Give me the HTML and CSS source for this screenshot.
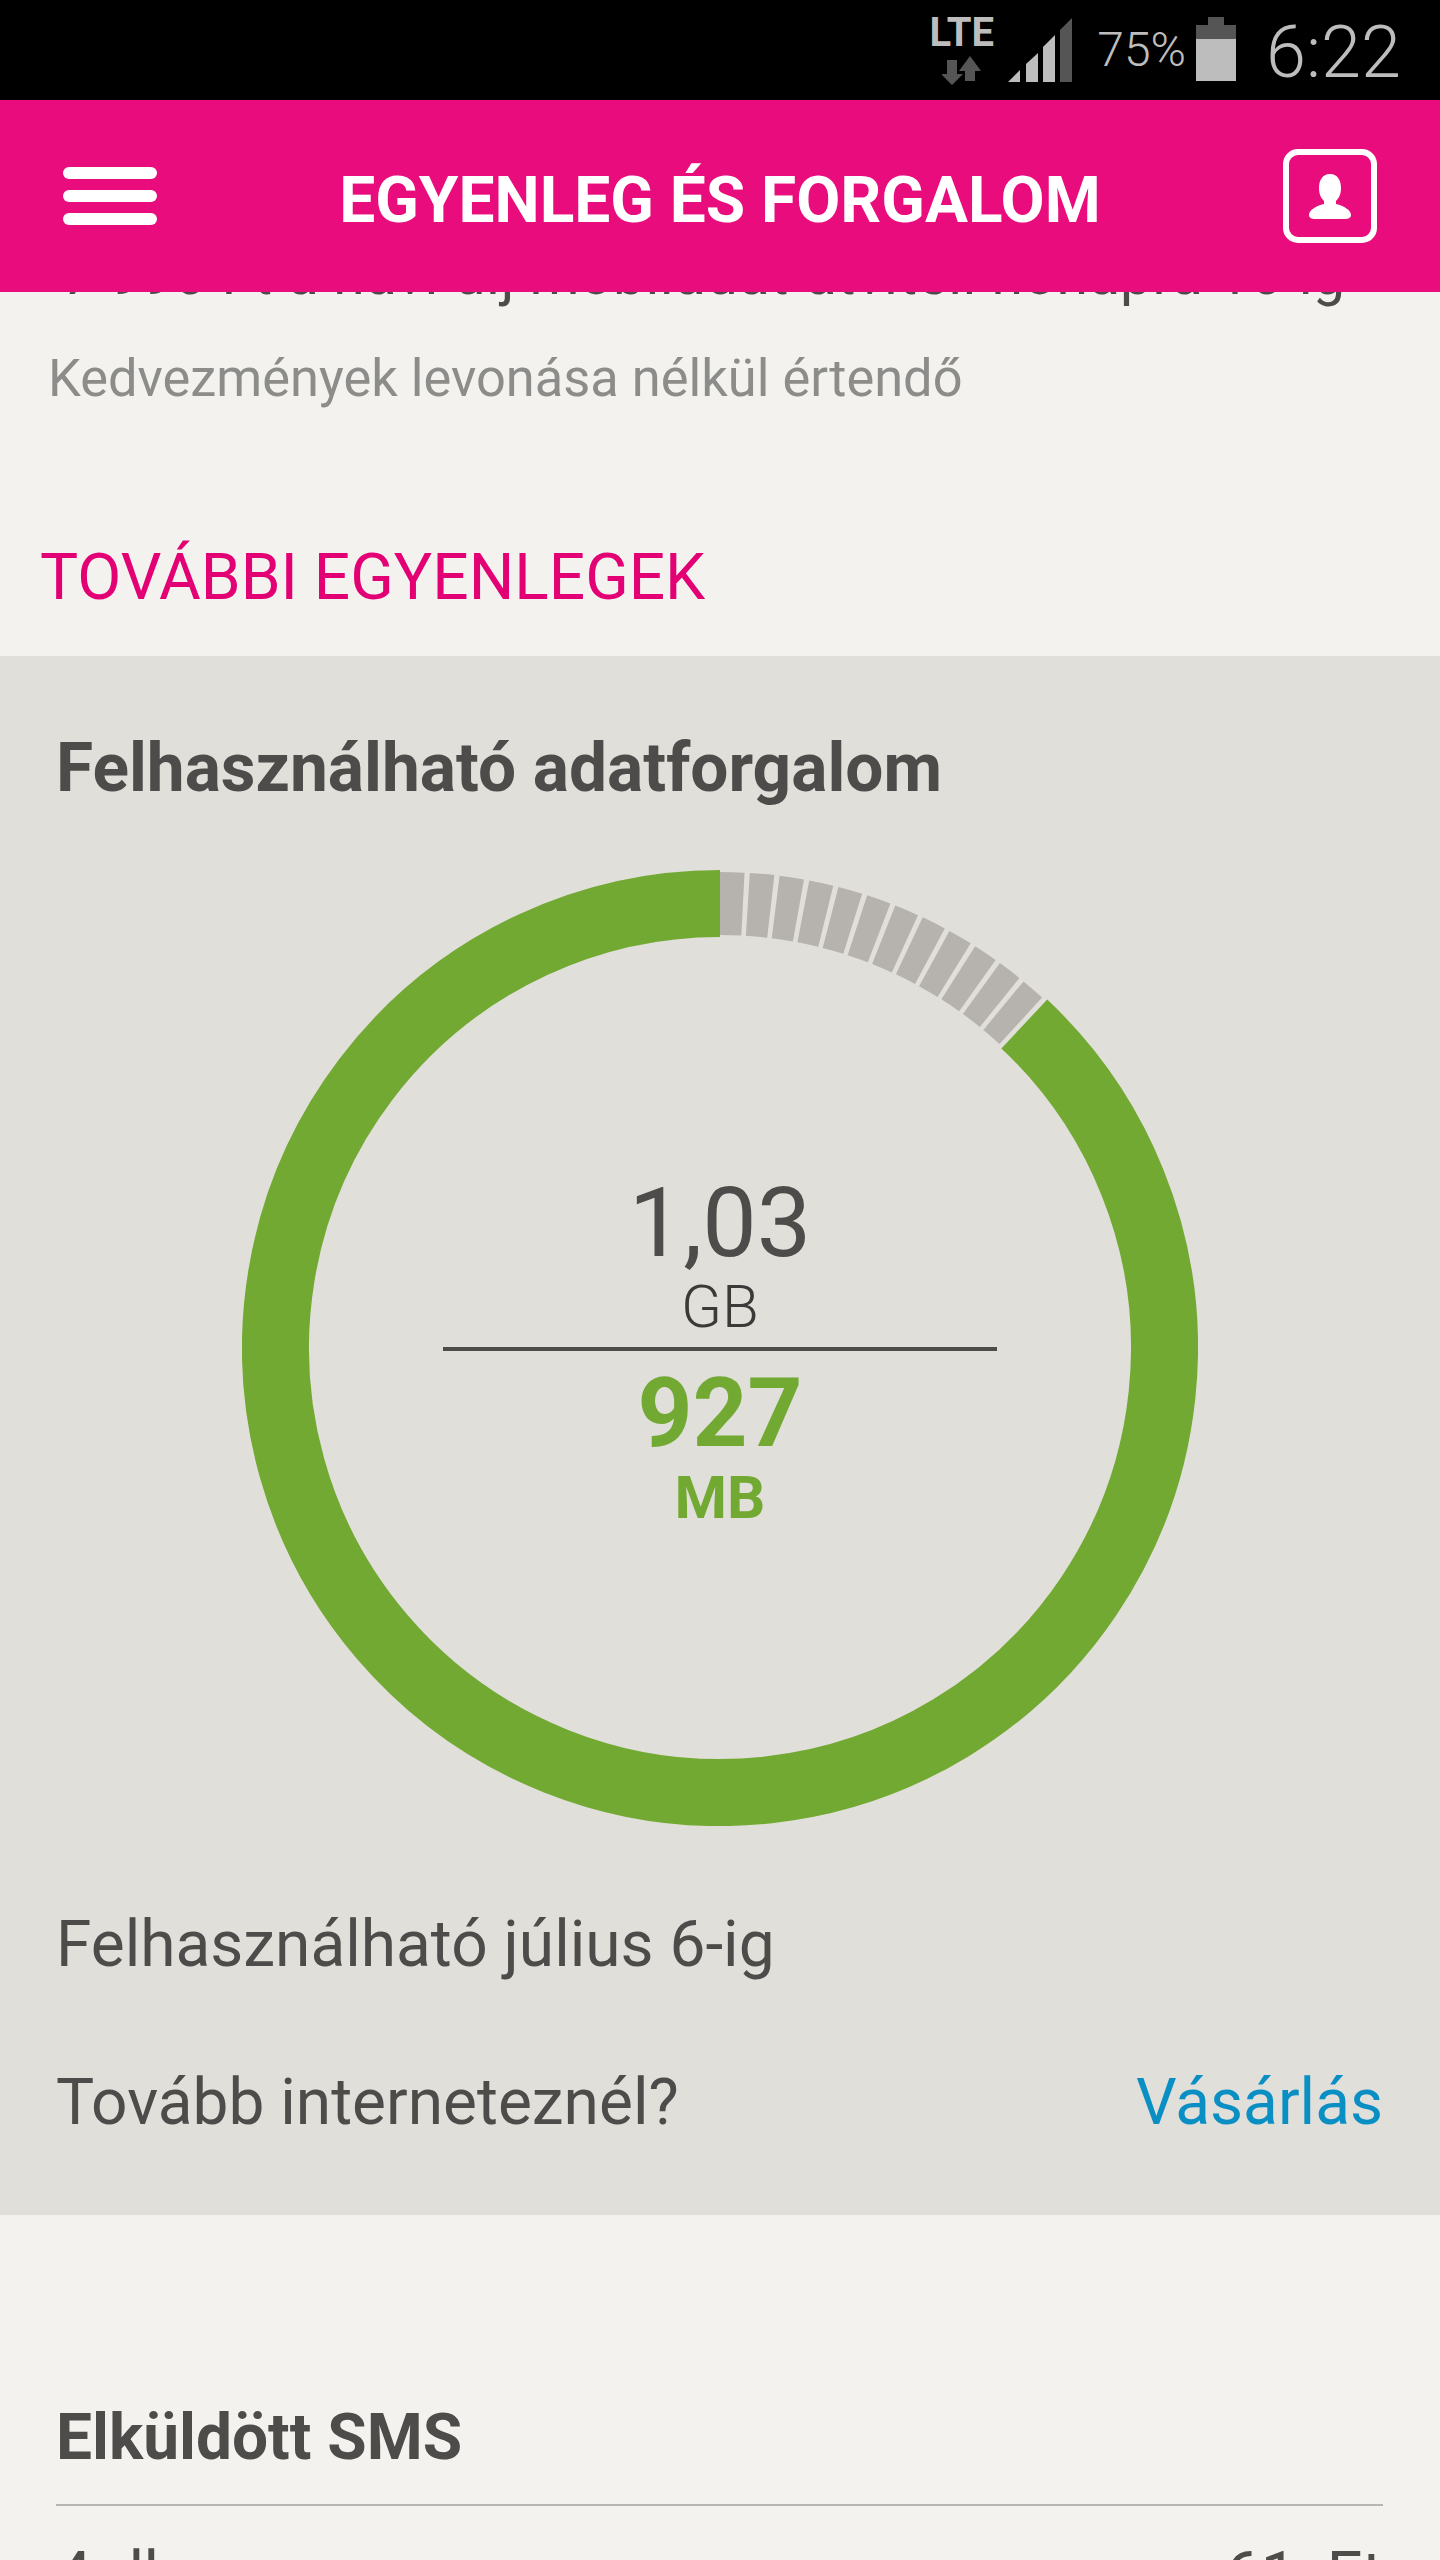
FILE: index.html
```html
<!DOCTYPE html>
<html lang="hu">
<head>
    <meta charset="UTF-8">
    <meta name="viewport" content="width=device-width, initial-scale=1.0">
    <title>Egyenleg és forgalom</title>
    <link rel="stylesheet" href="styles.css">
</head>
<body>
<div class="phone">

    <div class="status-bar">
        <div class="network">
            <span class="lte">LTE</span>
            <svg class="arrows" width="40" height="30" viewBox="0 0 40 30">
                <path class="dark" d="M5 5h10v14h6L10 30 -1 19h6z"/>
                <path class="dark" d="M29 1l11 15h-6v10H24V16h-6z" transform="translate(-1 0)"/>
            </svg>
        </div>
        <svg class="signal" width="64" height="64" viewBox="0 0 64 64">
            <path class="light" d="M0 64L12 52V64z"/>
            <path class="light" d="M18 46L30 35V64H18z"/>
            <path class="light" d="M35 29L47 17V64H35z"/>
            <path class="dark" d="M52 12L64 0V64H52z"/>
        </svg>
        <span class="battery-text">75%</span>
        <svg class="battery" width="40" height="64" viewBox="0 0 40 64">
            <path class="dark" d="M12 0H28V8H40V22H0V8H12z"/>
            <rect class="light" x="0" y="22" width="40" height="42"/>
        </svg>
        <span class="clock">6:22</span>
    </div>

    <header class="app-header">
        <div class="hamburger">
            <span></span>
            <span></span>
            <span></span>
        </div>
        <h1>EGYENLEG ÉS FORGALOM</h1>
        <div class="profile">
            <svg width="46" height="48" viewBox="0 0 46 48">
                <path d="M23 2c8 0 11 7 11 14 0 6-2 10-5 13v3c8 2 15 6 15 11 0 3-3 4-6 4H8c-3 0-6-1-6-4 0-5 7-9 15-11v-3c-3-3-5-7-5-13C12 9 15 2 23 2z"/>
            </svg>
        </div>
    </header>

    <main>
        <p class="hidden-line">7 990 Ft a havi díj mobiladat-átviteli hónapra 16-ig</p>
        <p class="note">Kedvezmények levonása nélkül értendő</p>
        <h2 class="section-title">TOVÁBBI EGYENLEGEK</h2>

        <section class="data-panel">
            <h3 class="panel-title">Felhasználható adatforgalom</h3>

            <div class="ring">
                <svg width="956" height="956" viewBox="0 0 956 956">
                    <path class="ring-used" d="M478 33.5A444.5 444.5 0 0 1 782.3 154"/>
                    <path class="ring-left" d="M782.3 154A444.5 444.5 0 1 1 478 33.5"/>
                </svg>
                <div class="ring-text">
                    <div class="total">1,03</div>
                    <div class="total-unit">GB</div>
                    <div class="ring-line"></div>
                    <div class="remaining">927</div>
                    <div class="remaining-unit">MB</div>
                </div>
            </div>

            <p class="valid">Felhasználható július 6-ig</p>
            <div class="buy-row">
                <span>Tovább interneteznél?</span>
                <a href="#">Vásárlás</a>
            </div>
        </section>

        <section class="sms">
            <h3 class="sms-title">Elküldött SMS</h3>
            <div class="sms-row">
                <span>4 db</span>
                <span class="sms-price">61 Ft</span>
            </div>
        </section>
    </main>

</div>
</body>
</html>
```

FILE: styles.css
```css
/* styles.css */
* {
    box-sizing: border-box;
}

body {
    margin: 0;
    font-family: Roboto, "Liberation Sans", sans-serif;
    color: #4e4c4a;
}

p, h1, h2, h3 {
    margin: 0;
    font-weight: normal;
}

.phone {
    width: 1440px;
    height: 2560px;
    overflow: hidden;
    background-color: #f3f2ee;
}

/* status bar */
.status-bar {
    height: 100px;
    background-color: #000;
    color: #bdbdbd;
    display: flex;
    align-items: flex-start;
    padding-right: 39px;
    justify-content: flex-end;
}

.light { fill: #bdbdbd; }
.dark { fill: #555; }

.network {
    display: flex;
    flex-direction: column;
    align-items: center;
    width: 65px;
    margin-top: 14px;
    margin-right: 14px;
}

.lte {
    font-size: 40px;
    font-weight: 700;
    line-height: 38px;
    white-space: nowrap;
}

.arrows {
    margin-top: 3px;
}

.signal {
    margin-top: 18px;
    margin-right: 25px;
}

.battery-text {
    font-size: 48px;
    font-weight: 300;
    line-height: 60px;
    margin-top: 20px;
    margin-right: 10px;
}

.battery {
    margin-top: 17px;
    margin-right: 30px;
}

.clock {
    font-size: 72px;
    font-weight: 300;
    line-height: 80px;
    margin-top: 13px;
}

/* pink header */
.app-header {
    position: relative;
    z-index: 1;
    height: 192px;
    background-color: #e90c7c;
    color: #fff;
    display: flex;
    align-items: center;
    justify-content: space-between;
    padding: 0 63px;
}

.hamburger {
    width: 94px;
    display: flex;
    flex-direction: column;
    gap: 11px;
}

.hamburger span {
    height: 12px;
    border-radius: 6px;
    background-color: #fff;
}

.app-header h1 {
    padding-top: 9px;
    font-size: 64px;
    font-weight: 700;
    line-height: 70px;
}

.profile {
    width: 94px;
    height: 94px;
    border: 6px solid #fff;
    border-radius: 15px;
    display: flex;
    align-items: center;
    justify-content: center;
}

.profile svg {
    fill: #fff;
}

/* top of the page, scrolled under the header */
.hidden-line {
    margin-top: -47px;
    padding-left: 62px;
    font-size: 57px;
    line-height: 60px;
    letter-spacing: 0.5px;
    white-space: nowrap;
}

.note {
    margin-top: 43px;
    padding-left: 48px;
    font-size: 52.4px;
    line-height: 60px;
    color: #8c8c8a;
}

.section-title {
    margin-top: 135px;
    padding-left: 40px;
    font-size: 64px;
    line-height: 70px;
    color: #e20074;
}

/* data panel */
.data-panel {
    margin-top: 43px;
    padding: 77px 57px 77px 56px;
    background-color: #e1dfd9;
}

.panel-title {
    font-size: 67.6px;
    font-weight: 700;
    line-height: 70px;
}

.ring {
    display: grid;
    justify-content: center;
    margin-top: 67px;
    padding-left: 1px;
}

.ring svg, .ring-text {
    grid-area: 1 / 1;
}

.ring svg {
    display: block;
    fill: none;
}

.ring-used {
    stroke: #b6b3ae;
    stroke-width: 63px;
    stroke-dasharray: 23 4.93;
}

.ring-left {
    stroke: #72a932;
    stroke-width: 67px;
}

.ring-text {
    display: flex;
    flex-direction: column;
    align-items: center;
    padding-top: 303px;
    text-align: center;
}

.total {
    font-size: 97px;
    line-height: 100px;
}

.remaining {
    font-size: 96px;
    line-height: 100px;
}

.total-unit, .remaining-unit {
    font-size: 60px;
    line-height: 70px;
}

.total-unit {
    margin-top: -1px;
    font-weight: 300;
    color: #3c3a38;
}

.ring-line {
    width: 554px;
    height: 4px;
    margin-top: 5px;
    background-color: #4e4c4a;
}

.remaining {
    margin-top: 12px;
    font-weight: 700;
    color: #72a932;
}

.remaining-unit {
    font-weight: 700;
    color: #72a932;
}

.valid {
    margin-top: 84px;
    font-size: 64px;
    line-height: 70px;
}

.buy-row {
    display: flex;
    justify-content: space-between;
    margin-top: 88px;
    font-size: 64px;
    line-height: 70px;
}

.buy-row a {
    color: #0a8fc4;
    text-decoration: none;
}

/* sms block */
.sms {
    margin-top: 188px;
    padding: 0 57px 0 56px;
}

.sms-title {
    padding-bottom: 31px;
    border-bottom: 2px solid #b8b6b0;
    font-size: 64px;
    font-weight: 700;
    line-height: 70px;
}

.sms-row {
    display: flex;
    justify-content: space-between;
    margin-top: 35px;
    font-size: 64px;
    line-height: 70px;
}

.sms-price {
    word-spacing: 14px;
}
```
